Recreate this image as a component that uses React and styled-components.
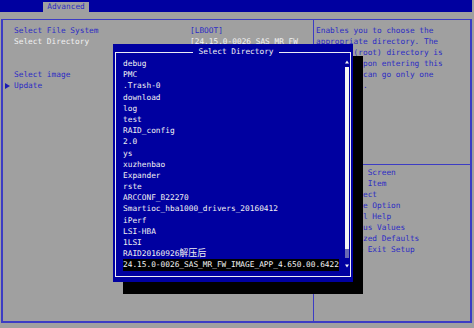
import styled, { createGlobalStyle } from 'styled-components';

const GlobalStyle = createGlobalStyle`
  html, body {
    margin: 0;
    padding: 0;
    background: #a0a0a0;
  }
  body {
    font-family: "DejaVu Sans Mono", "Liberation Mono", monospace;
    font-size: 7.8px;
  }
`;

const Screen = styled.div`
  position: relative;
  width: 474px;
  height: 328px;
  overflow: hidden;
  background: #a0a0a0;
`;

const TopBar = styled.div`
  height: 12px;
  margin-right: 2px;
  padding-left: 43px;
  background: #0000a0;
  display: flex;
  align-items: flex-end;
`;

const Tab = styled.div`
  width: 46px;
  height: 10px;
  line-height: 10px;
  background: #a0a0a0;
  color: #2c2cc4;
  text-align: center;
`;

const Frame = styled.div`
  margin: 7px 2px 0 1px;
  height: 304px;
  box-sizing: border-box;
  border: 2px solid #3c3cc4;
  border-top-width: 1px;
  display: grid;
  grid-template-columns: 311px 1fr;
`;

const LeftPanel = styled.div`
  border-right: 1px solid #3c3cc4;
  padding-top: 5px;
`;

const Row = styled.div`
  display: grid;
  grid-template-columns: 11px 176px 1fr;
  height: 11px;
  line-height: 11px;
  white-space: nowrap;
  color: ${p => (p.$active ? '#f2f2f2' : '#2c2cc4')};
`;

const Marker = styled.span`
  display: flex;
  align-items: center;
  padding-left: 2px;
`;

const RightPanel = styled.div`
  display: flex;
  flex-direction: column;
`;

const HelpText = styled.div`
  height: 145px;
  border-bottom: 1px solid #3c3cc4;
  padding: 5px 0 0 2px;
  box-sizing: border-box;
  color: #2c2cc4;
  line-height: 11px;
  white-space: nowrap;
`;

const KeyHelp = styled.div`
  padding: 2px 0 0 2px;
  color: #2c2cc4;
  line-height: 11px;
  white-space: nowrap;
`;

const Dialog = styled.div`
  position: absolute;
  left: 113px;
  top: 44px;
  width: 240px;
  height: 238px;
  box-sizing: border-box;
  padding: 3px 2px 5px 2px;
  background: #0000a0;
  box-shadow: 10px 12px 0 #000;
`;

const Box = styled.fieldset`
  margin: 0;
  height: 100%;
  box-sizing: border-box;
  min-inline-size: 0;
  border: 1px solid #ececf4;
  padding: 1px 1px 4px 7px;
  display: flex;
  gap: 5px;
`;

const Title = styled.legend`
  margin: 0 auto;
  padding: 0 5px;
  line-height: 10px;
  color: #f2f2f2;
`;

const List = styled.div`
  flex: 1;
  min-width: 0;
  color: #f2f2f2;
`;

const Item = styled.div`
  width: fit-content;
  height: 11.2px;
  line-height: 11.2px;
  white-space: nowrap;
  background: ${p => (p.$selected ? '#000' : 'transparent')};
`;

const Cjk = styled.span`
  font-family: "Noto Sans CJK SC", sans-serif;
  font-size: 9px;
  line-height: 9px;
`;

const ScrollCol = styled.div`
  width: 4px;
  display: flex;
  flex-direction: column;
  align-items: center;
  padding: 2px 0 4px;
`;

const Track = styled.div`
  flex: 1;
  width: 4px;
  margin: 3px 0 6px;
  background: #f4f4f4;
  display: flex;
  flex-direction: column;
  justify-content: flex-end;
`;

const Thumb = styled.div`
  height: 9px;
  background: #6a6ab4;
`;

const Arrow = ({ down }) => (
  <svg width="4" height="4" viewBox="0 0 4 4">
    <path d={down ? 'M0 0.5H4L2 3.5Z' : 'M0 3.5H4L2 0.5Z'} fill="#f4f4f4" />
  </svg>
);

const entries = [
  'debug', 'PMC', '.Trash-0', 'download', 'log', 'test', 'RAID_config', '2.0',
  'ys', 'xuzhenbao', 'Expander', 'rste', 'ARCCONF_B22270',
  'Smartioc_hba1000_drivers_20160412', 'iPerf', 'LSI-HBA', '1LSI',
];

const keys = [
  '→←: Select Screen',
  '↑↓: Select Item',
  'Enter: Select',
  '+/-: Change Option',
  'F1: General Help',
  'F2: Previous Values',
  'F3: Optimized Defaults',
  'F4: Save & Exit Setup',
];

const App = () => (
  <Screen>
    <GlobalStyle />
    <TopBar>
      <Tab>Advanced</Tab>
    </TopBar>
    <Frame>
      <LeftPanel>
        <Row><span /><span>Select File System</span><span>[LBOOT]</span></Row>
        <Row $active><span /><span>Select Directory</span><span>[24.15.0-0026_SAS_MR_FW</span></Row>
        <Row />
        <Row />
        <Row><span /><span>Select image</span><span /></Row>
        <Row>
          <Marker>
            <svg width="5" height="6" viewBox="0 0 5 6"><path d="M0 0L5 3L0 6Z" fill="#1c1cb4" /></svg>
          </Marker>
          <span>Update</span>
          <span />
        </Row>
      </LeftPanel>
      <RightPanel>
        <HelpText>
          <div>Enables you to choose the</div>
          <div>appropriate directory. The</div>
          <div>default (root) directory is</div>
          <div>selected upon entering this</div>
          <div>page. You can go only one</div>
          <div>level down.</div>
        </HelpText>
        <KeyHelp>
          {keys.map(k => <div key={k}>{k}</div>)}
        </KeyHelp>
      </RightPanel>
    </Frame>
    <Dialog>
      <Box>
        <Title>Select Directory</Title>
        <List>
          {entries.map(e => <Item key={e}>{e}</Item>)}
          <Item>RAID20160926<Cjk>解压后</Cjk></Item>
          <Item $selected>24.15.0-0026_SAS_MR_FW_IMAGE_APP_4.650.00.6422</Item>
        </List>
        <ScrollCol>
          <Arrow />
          <Track><Thumb /></Track>
          <Arrow down />
        </ScrollCol>
      </Box>
    </Dialog>
  </Screen>
);

export default App;
